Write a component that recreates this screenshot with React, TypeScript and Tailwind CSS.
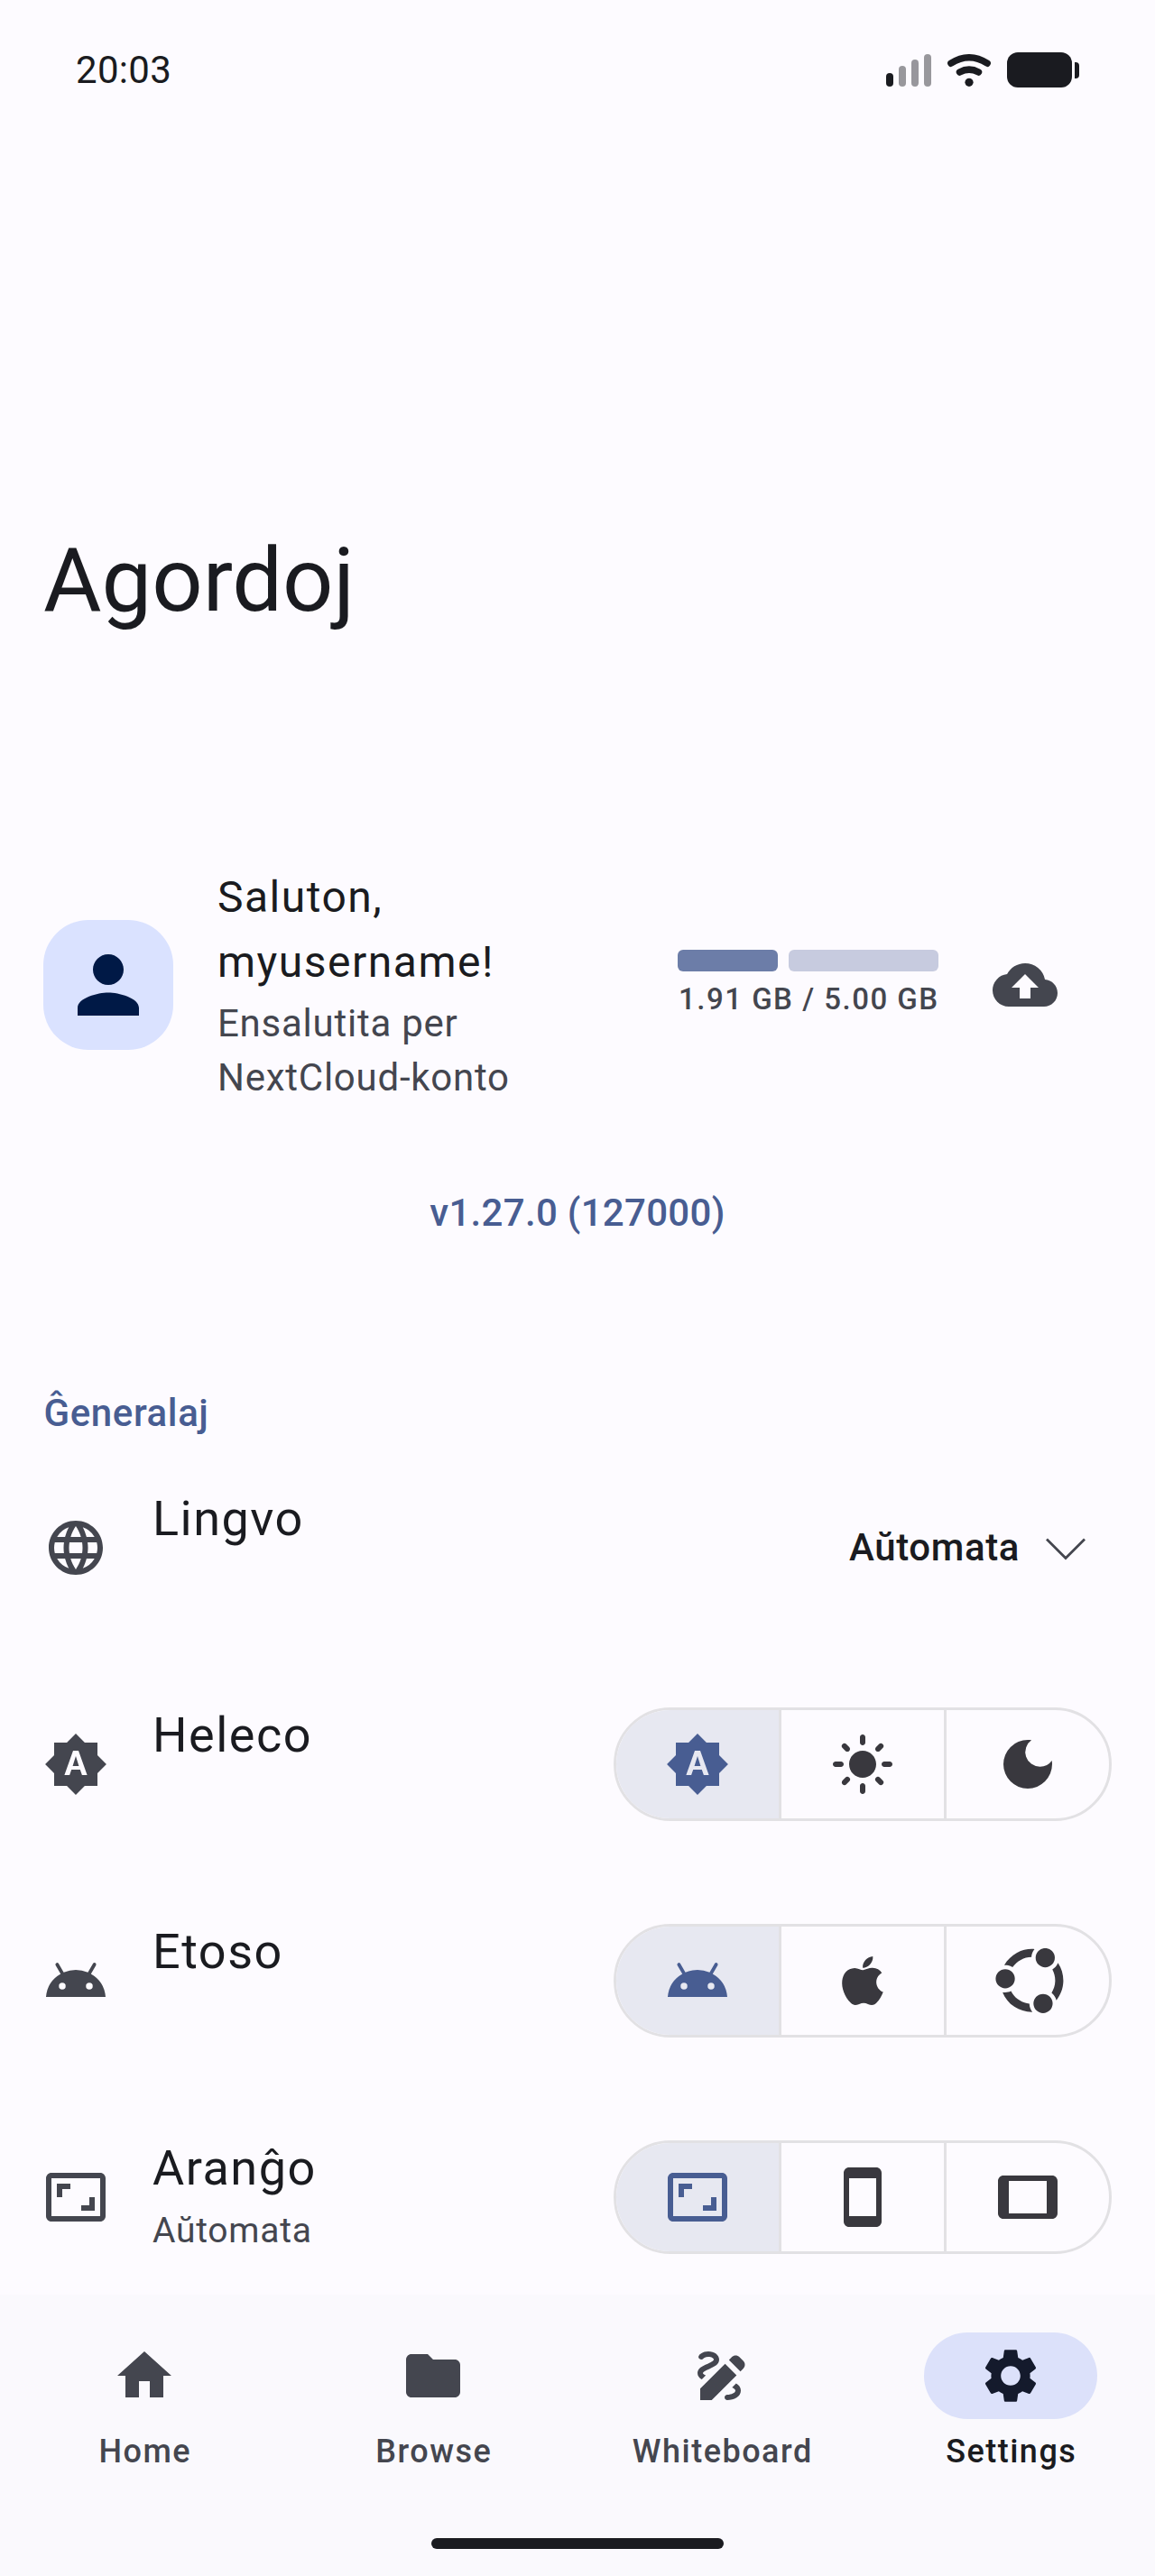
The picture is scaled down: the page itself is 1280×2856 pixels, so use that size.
import type { ReactNode } from "react";
import type { IconType } from "react-icons";
import {
  MdAndroid,
  MdAspectRatio,
  MdBackup,
  MdBrightnessAuto,
  MdDarkMode,
  MdDraw,
  MdFolder,
  MdHome,
  MdLanguage,
  MdLightMode,
  MdPerson,
  MdSettings,
  MdSmartphone,
  MdTablet,
} from "react-icons/md";
import { FaUbuntu } from "react-icons/fa6";

function AppleIcon({ className }: { className?: string }) {
  return (
    <svg className={className} viewBox="0 0 24 24" fill="currentColor">
      <path d="M17.05 20.28c-.98.95-2.05.8-3.08.35-1.09-.46-2.09-.48-3.24 0-1.44.62-2.2.44-3.06-.35C2.79 15.25 3.51 7.59 9.05 7.31c1.35.07 2.29.74 3.08.8 1.18-.24 2.31-.93 3.57-.84 1.51.12 2.65.72 3.4 1.8-3.12 1.87-2.38 5.98.48 7.13-.57 1.5-1.31 2.99-2.54 4.09l.01-.01zM12.03 7.25c-.15-2.23 1.66-4.07 3.74-4.25.29 2.58-2.34 4.5-3.74 4.25z" />
    </svg>
  );
}

function StatusBar() {
  return (
    <header className="flex h-[155px] shrink-0 items-center justify-between px-[84px] text-[#1a1b20]">
      <span className="text-[42px] leading-[50px] tracking-[0.3px]">20:03</span>
      <div className="flex items-center">
        <div className="mr-[18px] flex h-9 items-end gap-[6px]">
          <i className="h-[15px] w-2 rounded-full bg-[#1a1b20]" />
          <i className="h-[23px] w-2 rounded-full bg-[#98979c]" />
          <i className="h-[30px] w-2 rounded-full bg-[#98979c]" />
          <i className="h-9 w-2 rounded-full bg-[#98979c]" />
        </div>
        <svg className="mr-[18px] h-9 w-12" viewBox="0 0 48 36" fill="none" stroke="currentColor" strokeWidth="7.5" strokeLinecap="round">
          <path d="M3.9 10.2Q24 -2.6 44.1 10.2" />
          <path d="M13.5 20Q24 14.2 34.5 20" />
          <circle cx="24" cy="31.3" r="4.6" fill="currentColor" stroke="none" />
        </svg>
        <i className="h-[39px] w-[72px] rounded-xl bg-[#1a1b20]" />
        <i className="ml-[3px] h-[18px] w-[5px] rounded-r-[4px] bg-[#1a1b20]" />
      </div>
    </header>
  );
}

function Account() {
  return (
    <section className="flex h-[264px] items-center pl-12">
      <div className="flex size-36 items-center justify-center rounded-[50px] bg-[#dae2ff] text-[#001946]">
        <MdPerson className="size-[102px]" />
      </div>
      <div className="ml-12 w-[463px] pl-px">
        <p className="-mt-px mb-[2px] text-[48px] leading-[72px] tracking-[1.5px]">
          Saluton,
          <br />
          myusername!
        </p>
        <p className="-mb-px text-[42px] leading-[60px] tracking-[0.75px] text-[#44464f]">
          Ensalutita per
          <br />
          NextCloud-konto
        </p>
      </div>
      <div className="ml-12 w-[289px]">
        <div className="flex gap-3">
          <i className="h-6 w-[111px] rounded-[6px] bg-[#6c7da8]" />
          <i className="h-6 flex-1 rounded-[6px] bg-[#c7cbdf]" />
        </div>
        <p className="-mb-px mt-[7px] whitespace-nowrap pl-px text-[33px] font-medium leading-[48px] tracking-[1.5px] text-[#44464f]">
          1.91 GB / 5.00 GB
        </p>
      </div>
      <MdBackup className="ml-[60px] size-[72px] text-[#44464f]" />
    </section>
  );
}

function Segments({ children }: { children: ReactNode[] }) {
  return (
    <div className="flex h-[126px] overflow-hidden rounded-full border-[3px] border-[#e2e1e4]">
      {children.map((child, i) => (
        <button
          key={i}
          className={
            i === 0
              ? "flex w-[180px] items-center justify-center bg-[#e7e8f1] text-[#485d92]"
              : "flex w-[183px] items-center justify-center border-l-[3px] border-[#e2e1e4] text-[#39383e]"
          }
        >
          {child}
        </button>
      ))}
    </div>
  );
}

function Row({ icon: Icon, title, subtitle, children }: { icon: IconType; title: string; subtitle?: string; children: ReactNode }) {
  return (
    <div className="flex h-60 shrink-0 items-center px-12">
      <Icon className="size-[72px] shrink-0 text-[#44464f]" />
      <div className="ml-[49px] flex-1 self-start pt-[47px]">
        <p className="text-[54px] leading-[81px] tracking-[1.5px]">{title}</p>
        {subtitle && <p className="text-[39px] leading-[59px] tracking-[0.75px] text-[#44464f]">{subtitle}</p>}
      </div>
      {children}
    </div>
  );
}

function NavItem({ icon: Icon, label, active }: { icon: IconType; label: string; active?: boolean }) {
  return (
    <a className={active ? "flex w-80 flex-col items-center text-[#1a1b20]" : "flex w-80 flex-col items-center text-[#44464f]"}>
      <span className={active ? "flex h-24 w-48 items-center justify-center rounded-full bg-[#dce1fa] text-[#141a2c]" : "flex h-24 w-48 items-center justify-center"}>
        <Icon className="size-[72px]" />
      </span>
      <span className="mt-3 pl-[1.5px] text-[36px] font-medium leading-[48px] tracking-[1.5px]">{label}</span>
    </a>
  );
}

const icon = "size-[72px]";

export default function App() {
  return (
    <div className="flex h-[2856px] w-[1280px] flex-col overflow-hidden bg-[#fdfbff] font-[Roboto,sans-serif] text-[#1a1b20]">
      <StatusBar />
      <main className="flex min-h-0 flex-1 flex-col overflow-hidden">
        <h1 className="mt-[428px] pl-12 text-[99px] leading-[120px]">Agordoj</h1>
        <div className="mt-[257px]">
          <Account />
        </div>
        <p className="mt-[91px] text-center text-[42px] font-medium leading-[60px] tracking-[0.3px] text-[#485d92]">v1.27.0 (127000)</p>
        <h2 className="mb-[-1px] mt-[162px] pl-[48.5px] text-[42px] font-medium leading-[60px] tracking-[0.6px] text-[#485d92]">Ĝeneralaj</h2>
        <Row icon={MdLanguage} title="Lingvo">
          <button className="mr-7 flex items-center">
            <span className="text-[42px] font-medium leading-[60px] tracking-[0.6px]">Aŭtomata</span>
            <svg className="ml-7 mt-1 h-[26px] w-[46px] text-[#44464f]" viewBox="0 0 46 26" fill="none" stroke="currentColor" strokeWidth="2.8">
              <path d="M2 1.5 23 22.5 44 1.5" />
            </svg>
          </button>
        </Row>
        <Row icon={MdBrightnessAuto} title="Heleco">
          <Segments>
            <MdBrightnessAuto className={icon} />
            <MdLightMode className={icon} />
            <MdDarkMode className={icon} />
          </Segments>
        </Row>
        <Row icon={MdAndroid} title="Etoso">
          <Segments>
            <MdAndroid className={icon} />
            <AppleIcon className={icon} />
            <span className="flex size-[72px] items-center">
              <FaUbuntu className="h-[72px] w-[81px] shrink-0" />
            </span>
          </Segments>
        </Row>
        <Row icon={MdAspectRatio} title="Aranĝo" subtitle="Aŭtomata">
          <Segments>
            <MdAspectRatio className={icon} />
            <MdSmartphone className={icon} />
            <MdTablet className={icon} />
          </Segments>
        </Row>
      </main>
      <nav className="flex h-[312px] shrink-0 flex-col items-center bg-[#faf9fd] pt-[42px]">
        <div className="flex">
          <NavItem icon={MdHome} label="Home" />
          <NavItem icon={MdFolder} label="Browse" />
          <NavItem icon={MdDraw} label="Whiteboard" />
          <NavItem icon={MdSettings} label="Settings" active />
        </div>
        <i className="mt-[72px] h-3 w-[324px] rounded-full bg-[#1a1b20]" />
      </nav>
    </div>
  );
}
